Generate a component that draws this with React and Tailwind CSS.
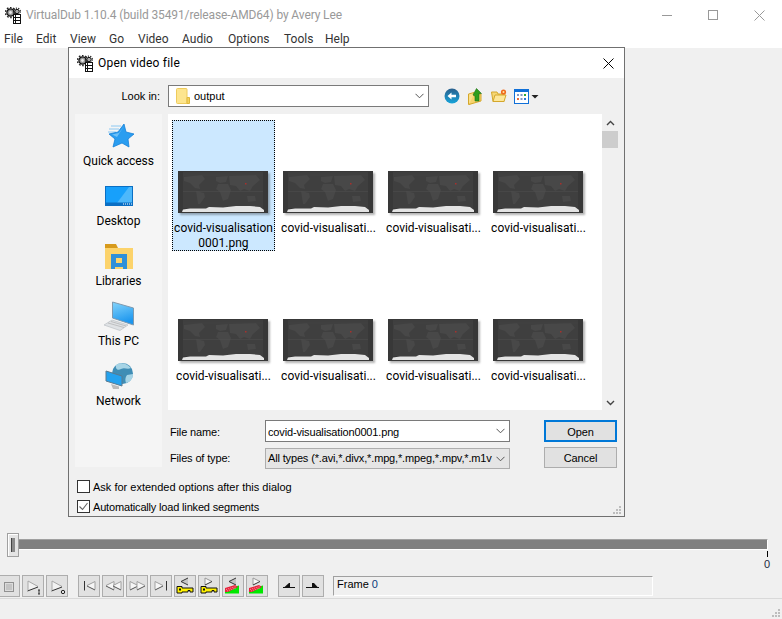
import React from "react";

const Chevron = ({ c = "#555" }) => (
  <svg width="9" height="6" viewBox="0 0 9 6" className="shrink-0">
    <path d="M0.5 0.8 L4.5 4.8 L8.5 0.8" fill="none" stroke={c} strokeWidth="1" />
  </svg>
);

const AppIcon = () => (
  <svg width="17" height="17" viewBox="0 0 17 17" className="shrink-0">
    <circle cx="5.5" cy="5.5" r="3.6" fill="#9a9a9a" stroke="#111" strokeWidth="1.2" />
    <circle cx="5.5" cy="5.5" r="5" fill="none" stroke="#222" strokeWidth="1.6" strokeDasharray="1.6 1.6" />
    <circle cx="5.5" cy="5.5" r="1.4" fill="#e8e8e8" />
    <circle cx="12" cy="4.5" r="2.2" fill="#aaa" stroke="#111" strokeWidth="1" />
    <circle cx="12" cy="4.5" r="3.4" fill="none" stroke="#222" strokeWidth="1.2" strokeDasharray="1.2 1.2" />
    <rect x="8.5" y="7.5" width="7" height="9" fill="#fff" stroke="#111" />
    <path d="M8.5 10.5H15.5M8.5 13.5H15.5M10.5 7.5V16.5" stroke="#111" />
  </svg>
);

const Thumb = () => (
  <svg width="90" height="42" viewBox="0 0 90 42" className="block shrink-0 shadow-[2px_2px_2px_rgba(0,0,0,0.3)]">
    <rect width="90" height="42" fill="#383838" />
    <rect x="5" y="1" width="80" height="36" fill="#3f3f3f" />
    <path d="M6 6L24 4L27 8L21 14L22 18L17 17L12 12L6 10Z M18 20L26 22L27 26L22 33L20 33Z M38 6L50 5L48 11L42 12L38 10Z M40 13L50 13L53 19L50 28L45 30L42 21L38 18Z M51 5L78 4L82 9L75 15L72 20L66 18L62 20L58 15L52 14Z M69 25L77 25L78 30L70 31Z"
      fill="#484848" />
    <path d="M5 20.5H85" stroke="#505050" strokeWidth="0.5" />
    <path d="M5 4H85" stroke="#464646" strokeWidth="0.5" />
    <path d="M4 41L5 38.5L12 37.5L28 37.5L31 36L45 36.5L58 35L72 35L82 36L86 39L86 41Z" fill="#e4e4e4" />
    <rect x="67" y="12" width="1.5" height="1.5" fill="#a8302c" />
  </svg>
);

const Star = () => (
  <svg width="30" height="26" viewBox="0 0 30 26">
    <path d="M7 3H17M5 6H15M4 9H12" stroke="#8cc8f2" strokeWidth="1" />
    <path d="M20 1L22 9L30 11L24 16L25 24L18 20L9 24L11 16L5 11L14 9Z" fill="#2a9df0" stroke="#1480d8" strokeWidth="0.8" />
    <path d="M20 3L15 10L8 11.5L13 14Z" fill="#70c0f6" />
  </svg>
);

const DesktopIc = () => (
  <svg width="28" height="20" viewBox="0 0 28 20">
    <rect x="0.5" y="0.5" width="27" height="19" fill="#17a0fb" stroke="#0a6fc4" />
    <path d="M12 17L24 1H27V17Z" fill="#4db8fb" />
    <rect x="1" y="16.5" width="26" height="3" fill="#0a6fc4" />
    <path d="M18 18H27" stroke="#fff" strokeWidth="1" strokeDasharray="1 1" />
  </svg>
);

const LibIc = () => (
  <svg width="28" height="25" viewBox="0 0 28 25">
    <path d="M0 0H11L13 4H28V24H0Z" fill="#d79a1c" />
    <rect x="0" y="4" width="28" height="21" fill="#fcd36b" />
    <rect x="6" y="10" width="16" height="13" fill="#2f8fd8" />
    <rect x="11" y="14" width="6" height="5" fill="#fcd36b" />
    <rect x="6" y="23" width="4" height="2" fill="#2f8fd8" />
    <rect x="18" y="23" width="4" height="2" fill="#2f8fd8" />
  </svg>
);

const PcIc = () => (
  <svg width="32" height="30" viewBox="0 0 32 30">
    <defs>
      <linearGradient id="pcg" x1="0" y1="0" x2="0.3" y2="1">
        <stop offset="0" stopColor="#84d4fb" />
        <stop offset="1" stopColor="#1c96ee" />
      </linearGradient>
    </defs>
    <path d="M9.5 1L30.5 7V24L9.5 17Z" fill="url(#pcg)" stroke="#7f9ab0" />
    <path d="M1 24L9 19L25 24L17 29.5Z" fill="#dfe2e5" stroke="#b4b9bd" strokeWidth="0.6" />
    <path d="M5 22L21 26.5M8 20.5L23 25" stroke="#a8a8a8" strokeWidth="0.6" />
  </svg>
);

const NetIc = () => (
  <svg width="30" height="29" viewBox="0 0 30 29">
    <circle cx="18.5" cy="11.5" r="10.5" fill="#3f8db5" />
    <path d="M12 3C16 0 23 1 27 6C23 8 21 5 17 7C14 9 11 7 12 3Z M23 13L29 12C29 17 26 20 22 21C21 18 21 16 23 13Z" fill="#a6d4e6" />
    <path d="M2 9L18 14V24L2 19Z" fill="#24a2ee" stroke="#5a7a90" />
    <path d="M7 22L15 24.5V27H9Z" fill="#bbb" />
  </svg>
);

const Back = () => (
  <svg width="16" height="16" viewBox="0 0 16 16">
    <defs>
      <linearGradient id="bk" x1="0" y1="0" x2="0" y2="1">
        <stop offset="0" stopColor="#2a5f8c" />
        <stop offset="1" stopColor="#17a4da" />
      </linearGradient>
    </defs>
    <circle cx="8" cy="8" r="7.5" fill="url(#bk)" />
    <path d="M3.5 8L7.5 4.5V6.8H12V9.2H7.5V11.5Z" fill="#fff" />
  </svg>
);

const UpFolder = () => (
  <svg width="15" height="17" viewBox="0 0 15 17">
    <path d="M0.5 6L6 4.5V14L0.5 16.5Z" fill="#fbe08a" stroke="#d4a72c" />
    <path d="M6 6H13V13L1 16.5" fill="#f6d36c" stroke="#d4a72c" />
    <path d="M8.5 0.5L13.5 5.5H11V13H7V8L5 7Z" fill="#2e9e1e" stroke="#1c6e12" strokeWidth="0.6" />
  </svg>
);

const NewFolder = () => (
  <svg width="16" height="14" viewBox="0 0 16 14">
    <path d="M0.5 3H6L7 5H13V12.5H2Z" fill="#f6d775" stroke="#d4a72c" />
    <path d="M2 12.5L4 6H15L13 12.5Z" fill="#fde79a" stroke="#d4a72c" />
    <circle cx="12.5" cy="3" r="2.6" fill="#f06a1c" />
    <circle cx="12.5" cy="3" r="1" fill="#ffe6a0" />
  </svg>
);

const Views = () => (
  <svg width="25" height="15" viewBox="0 0 25 15">
    <rect x="0.5" y="0.5" width="14" height="14" fill="#fff" stroke="#1070d8" />
    <rect x="0.5" y="0.5" width="14" height="2.5" fill="#1070d8" />
    <rect x="3" y="5" width="2" height="2" fill="#8098c8" />
    <rect x="6.5" y="5" width="2" height="2" fill="#8098c8" />
    <rect x="10" y="5" width="2" height="2" fill="#2aa838" />
    <rect x="3" y="9" width="2" height="2" fill="#e86a3a" />
    <rect x="6.5" y="9" width="2" height="2" fill="#8098c8" />
    <rect x="10" y="9" width="2" height="2" fill="#2a78d8" />
    <path d="M17.5 6H24.5L21 9.5Z" fill="#222" />
  </svg>
);

const SmallFolder = () => (
  <svg width="14" height="16" viewBox="0 0 14 16" className="shrink-0">
    <path d="M0.5 1.5Q0.5 0.5 1.5 0.5H10Q11 0.5 11 1.5V15.5H1.5Q0.5 15.5 0.5 14.5Z" fill="#fde58e" stroke="#eecb5c" />
    <path d="M11 9.5H13.5V15.5H11Z" fill="#f3d25f" stroke="#e0b83c" />
  </svg>
);

const sidebar = [
  [<Star key="s" />, "Quick access"],
  [<DesktopIc key="d" />, "Desktop"],
  [<LibIc key="l" />, "Libraries"],
  [<PcIc key="p" />, "This PC"],
  [<NetIc key="n" />, "Network"],
];

const files = [
  "covid-visualisation 0001.png",
  "covid-visualisati...", "covid-visualisati...", "covid-visualisati...",
  "covid-visualisati...", "covid-visualisati...", "covid-visualisati...", "covid-visualisati...",
];

const menus = [["File", 32], ["Edit", 34], ["View", 39], ["Go", 29], ["Video", 44], ["Audio", 46], ["Options", 56], ["Tools", 41], ["Help", 40]];

const G = ({ children }) => (
  <svg width="20" height="20" viewBox="0 0 20 20" className="block">{children}</svg>
);

const PlayTri = () => (
  <g>
    <path d="M5 5V14L15 11Z" fill="#f2f2f2" />
    <path d="M5 14V5L15 10.5" fill="none" stroke="#a8a8a8" />
    <path d="M4.5 15L15 11" stroke="#333" />
  </g>
);
const RTri = ({ x }) => (
  <g transform={`translate(${x} 0)`}>
    <path d="M0 5.5V13.5L8 10Z" fill="#f6f6f6" />
    <path d="M0 13.5V5.5L8 9.5" fill="none" stroke="#a0a0a0" />
    <path d="M0 14L8 10" stroke="#555" />
  </g>
);
const LTri = ({ x }) => (
  <g transform={`translate(${x} 0)`}>
    <path d="M8 5.5V13.5L0 10Z" fill="#f6f6f6" />
    <path d="M8 13.5V5.5L0 9.5" fill="none" stroke="#a0a0a0" />
    <path d="M8 14L0 10" stroke="#555" />
  </g>
);
const FlagL = () => (
  <g>
    <path d="M13 2V9L6 5.5Z" fill="#c4c4c4" />
    <path d="M13 2L6 5.5L13 9" fill="none" stroke="#333" strokeWidth="1" />
  </g>
);
const FlagR = () => (
  <g>
    <path d="M6 2V9L13 5.5Z" fill="#f8f8f8" />
    <path d="M6 9V2L13 5.5" fill="none" stroke="#999" strokeWidth="1" />
    <path d="M6 9L13 5.5" stroke="#333" strokeWidth="1" />
  </g>
);
const Key = () => (
  <g>
    <path d="M2 10.5H7V12H18V16H15V14.5H13V16H7V17H2Z" fill="#fff200" stroke="#111" />
    <rect x="4" y="12.5" width="2" height="2" fill="#111" />
  </g>
);
const Scene = () => (
  <g>
    <path d="M2 17.5V13L16 9.5V17.5Z" fill="#00e800" />
    <path d="M2 16V12L12 9L15 11L5 16Z" fill="#e8203a" />
    <path d="M3 13.5L13 10.5M4 15L13 12" stroke="#f7b6b6" strokeWidth="0.8" strokeDasharray="1 1" />
  </g>
);

const tools = [
  <G key="0"><rect x="5.5" y="6.5" width="9" height="9" fill="#dcdcdc" stroke="#444" strokeDasharray="1 1" /><rect x="7" y="8" width="6" height="6" fill="#c4c4c4" /></G>,
  <G key="1"><PlayTri /><path d="M16 14V18M15 18H17M15 14H17" stroke="#222" strokeWidth="0.9" /></G>,
  <G key="2"><PlayTri /><circle cx="16" cy="16" r="1.7" fill="none" stroke="#222" /></G>,
  <G key="3"><path d="M5.5 5V14.5" stroke="#333" /><LTri x={8} /></G>,
  <G key="4"><LTri x={3} /><LTri x={10} /></G>,
  <G key="5"><RTri x={3} /><RTri x={10} /></G>,
  <G key="6"><RTri x={4} /><path d="M15.5 5V14.5" stroke="#333" /></G>,
  <G key="7"><FlagL /><Key /></G>,
  <G key="8"><FlagR /><Key /></G>,
  <G key="9"><FlagL /><Scene /></G>,
  <G key="10"><FlagR /><Scene /></G>,
  <G key="11"><path d="M5 11.5L10 7L11 7V11.5Z" fill="#111" /><path d="M4 11.5H16" stroke="#111" /></G>,
  <G key="12"><path d="M9 11.5V7L11 7L15 11.5Z" fill="#111" /><path d="M3 11.5H16" stroke="#111" /></G>,
];

const ToolBtn = ({ children, className = "" }) => (
  <div className={`w-[22px] h-[22px] shrink-0 border border-[#adadad] bg-[#e1e1e1] flex items-center justify-center ${className}`}>{children}</div>
);

const Grip = () => (
  <svg width="10" height="10" viewBox="0 0 10 10">
    <path d="M7 1h2v2H7z M4 4h2v2H4z M7 4h2v2H7z M1 7h2v2H1z M4 7h2v2H4z M7 7h2v2H7z" fill="#bdbdbd" />
  </svg>
);

export default function App() {
  return (
    <div className="relative w-[782px] h-[619px] overflow-hidden bg-[#f0f0f0] text-[12px] text-black font-['Roboto',sans-serif]">
      <div className="h-[30px] bg-white flex items-center pl-[5px] relative">
        <AppIcon />
        <span className="ml-[4px] text-[#999999] tracking-[-0.12px]">VirtualDub 1.10.4 (build 35491/release-AMD64) by Avery Lee</span>
        <div className="ml-auto flex items-center h-full">
          <div className="w-[46px] flex justify-center"><div className="w-[10px] h-px bg-[#999]" /></div>
          <div className="w-[46px] flex justify-center"><div className="w-[10px] h-[10px] border border-[#999]" /></div>
          <div className="w-[46px] flex justify-center">
            <svg width="11" height="11" viewBox="0 0 11 11"><path d="M0.5 0.5L10.5 10.5M10.5 0.5L0.5 10.5" stroke="#999" /></svg>
          </div>
        </div>
      </div>
      <div className="h-[18px] bg-white flex items-center pl-[4px] text-[#333]">
        {menus.map(([m, w]) => (
          <span key={m} style={{ width: w }} className="shrink-0">{m}</span>
        ))}
      </div>

      <div className="pt-[491px]">
        <div className="relative ml-[7px] w-[761px] h-[11px] bg-[#808080] border-t border-t-[#a0a0a0] border-b border-b-white border-r border-r-white">
          <div className="absolute left-0 top-[-7px] w-[12px] h-[24px] bg-[#e4e4e4] border border-[#a0a0a0] flex items-center justify-center shadow-[inset_1px_1px_0_#fff]">
            <div className="w-[4px] h-[14px] bg-[#8a8a8a] border-l border-[#444]" />
          </div>
        </div>
        <div className="flex flex-col items-end w-[774px] font-['Liberation_Sans',sans-serif] text-[11px]">
          <div className="w-px h-[6px] mt-[1px] mr-[6.5px] bg-black" />
          <div className="h-[14px] leading-[14px] mr-[4px] text-[#1c2a40]">0</div>
        </div>
        <div className="mt-[4px] flex h-[22px] ml-[-2px]">
          <div className="flex gap-[2px]">{tools.slice(0, 3).map((t, i) => <ToolBtn key={i}>{t}</ToolBtn>)}</div>
          <div className="flex gap-[2px] ml-[10px]">{tools.slice(3, 11).map((t, i) => <ToolBtn key={i}>{t}</ToolBtn>)}</div>
          <div className="flex gap-[2px] ml-[10px]">{tools.slice(11).map((t, i) => <ToolBtn key={i}>{t}</ToolBtn>)}</div>
          <div className="ml-[9px] mt-[1px] w-[320px] h-[20px] border border-t-[#a0a0a0] border-l-[#a0a0a0] border-r-white border-b-white pl-[3px] leading-[14px] flex font-['Liberation_Sans',sans-serif] text-[11px]">
            <span>Frame</span><span className="ml-[3px] text-[#0a3a7a]">0</span>
          </div>
        </div>
        <div className="mt-[1px] h-px bg-[#d9d9d9]" />
      </div>
      <div className="absolute right-[1px] bottom-[1px]"><Grip /></div>

      {/* dialog window */}
      <div className="absolute left-[68px] top-[47px] w-[557px] h-[470px] border border-[#707070] bg-[#f0f0f0] flex flex-col">
        <div className="h-[30px] bg-white flex items-center pl-[8px] shrink-0">
          <AppIcon />
          <span className="ml-[4px] text-[#000] text-[12px] tracking-[0.2px]">Open video file</span>
          <div className="ml-auto mr-[10px]">
            <svg width="11" height="11" viewBox="0 0 11 11"><path d="M0.5 0.5L10.5 10.5M10.5 0.5L0.5 10.5" stroke="#000" /></svg>
          </div>
        </div>

        <div className="mt-[7px] h-[22px] flex items-center shrink-0 font-['Liberation_Sans',sans-serif] text-[11px]">
          <span className="w-[91px] text-right">Look in:</span>
          <div className="ml-[8px] w-[261px] h-[22px] bg-white border border-[#7a7a7a] flex items-center pl-[7px] pr-[4px]">
            <SmallFolder />
            <span className="ml-[4px]">output</span>
            <div className="ml-auto"><Chevron /></div>
          </div>
          <div className="ml-[15px] flex items-center">
            <Back />
            <div className="ml-[8px]"><UpFolder /></div>
            <div className="ml-[8px]"><NewFolder /></div>
            <div className="ml-[7px]"><Views /></div>
          </div>
        </div>

        <div className="mt-[7px] flex h-[353px] shrink-0 pl-[6px]">
          <div className="w-[87px] h-full bg-[#f5f5f5] pt-[6px] flex flex-col items-center shrink-0">
            {sidebar.map(([ic, label]) => (
              <div key={label} className="h-[60px] w-full flex flex-col items-center">
                <div className="h-[32px] flex items-center justify-center">{ic}</div>
                <div className="mt-[1px] leading-[16px] whitespace-nowrap">{label}</div>
              </div>
            ))}
          </div>

          <div className="ml-[6px] flex flex-col w-[450px]">
            <div className="h-[296px] flex shrink-0">
              <div className="w-[434px] bg-white pl-[4px] pt-[6px] grid grid-cols-[repeat(4,105px)] auto-rows-[148px]">
                {files.map((f, i) => (
                  <div key={i} className={`w-[103px] h-[131px] flex flex-col items-center pt-[51px] ${i === 0 ? "bg-[#cce8ff] outline-1 outline-dotted outline-black outline-offset-[-1px]" : ""}`}>
                    <div className="self-start ml-[6px]"><Thumb /></div>
                    <div className="mt-[8px] leading-[15px] text-center whitespace-nowrap">
                      {i === 0 ? (<><div>covid-visualisation</div><div>0001.png</div></>) : f}
                    </div>
                  </div>
                ))}
              </div>
              <div className="w-[16px] flex flex-col items-center relative">
                <svg width="9" height="6" viewBox="0 0 9 6" className="mt-[6px]"><path d="M1 5L4.5 1.5L8 5" fill="none" stroke="#444" strokeWidth="1.4" /></svg>
                <div className="mt-[5px] w-full h-[17px] bg-[#cdcdcd]" />
                <svg width="9" height="6" viewBox="0 0 9 6" className="mt-auto mb-[4px]"><path d="M1 1L4.5 4.5L8 1" fill="none" stroke="#444" strokeWidth="1.4" /></svg>
              </div>
            </div>

            <div className="font-['Liberation_Sans',sans-serif] text-[11px] tracking-[-0.15px]">
              <div className="mt-[10px] h-[22px] flex items-center">
                <span className="ml-[2px] w-[95px] pt-[2px]">File name:</span>
                <div className="w-[245px] h-[22px] bg-white border border-[#7a7a7a] flex items-center pl-[2px] pr-[4px]">
                  <span className="pt-[2px]">covid-visualisation0001.png</span>
                  <div className="ml-auto"><Chevron /></div>
                </div>
                <div className="ml-[34px] w-[73px] h-[22px] bg-[#e1e1e1] border-2 border-[#0078d7] flex items-center justify-center pt-[2px]">Open</div>
              </div>
              <div className="mt-[6px] h-[21px] flex items-center">
                <span className="ml-[2px] w-[95px]">Files of type:</span>
                <div className="w-[245px] h-[21px] bg-[#e5e5e5] border border-[#adadad] flex items-center pl-[2px] pr-[4px]">
                  <span className="whitespace-nowrap">All types (*.avi,*.divx,*.mpg,*.mpeg,*.mpv,*.m1v</span>
                  <div className="ml-auto"><Chevron /></div>
                </div>
                <div className="ml-[34px] mt-[-2px] w-[73px] h-[21px] bg-[#e1e1e1] border border-[#adadad] flex items-center justify-center pt-[2px]">Cancel</div>
              </div>
            </div>
          </div>
        </div>

        <div className="mt-[13px] pl-[8px] flex items-center h-[13px] shrink-0 font-['Liberation_Sans',sans-serif] text-[11px]">
          <div className="w-[13px] h-[13px] bg-white border border-[#333]" />
          <span className="ml-[3px] pt-[2px]">Ask for extended options after this dialog</span>
        </div>
        <div className="mt-[7px] pl-[8px] flex items-center h-[13px] shrink-0 font-['Liberation_Sans',sans-serif] text-[11px] tracking-[-0.17px]">
          <div className="w-[13px] h-[13px] bg-white border border-[#333] flex items-center justify-center">
            <svg width="11" height="11" viewBox="0 0 11 11"><path d="M1.5 5.5L4.5 8.5L9.5 2" fill="none" stroke="#666" strokeWidth="1.1" /></svg>
          </div>
          <span className="ml-[3px] pt-[2px]">Automatically load linked segments</span>
        </div>
        <div className="absolute right-[2px] bottom-[1px]"><Grip /></div>
      </div>
    </div>
  );
}
